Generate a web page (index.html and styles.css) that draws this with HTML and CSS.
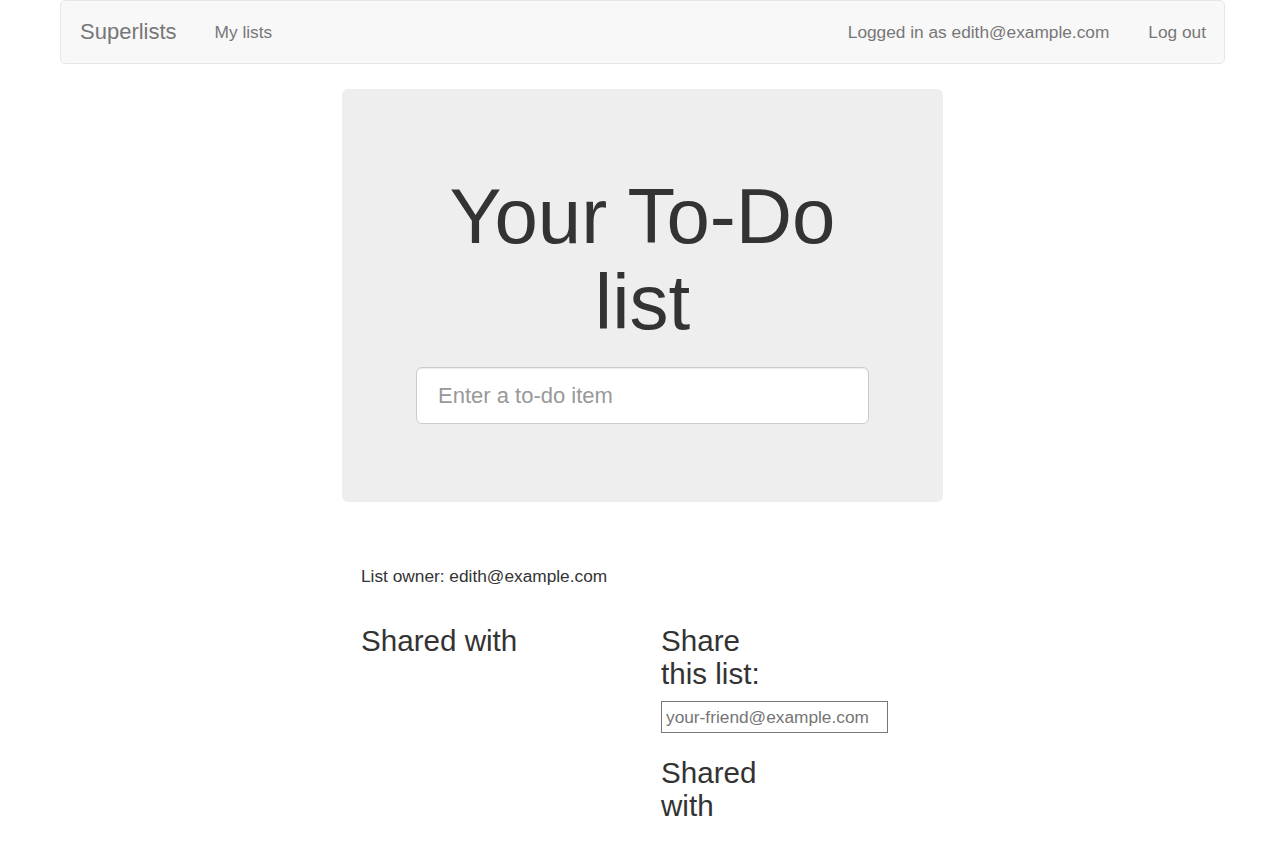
FILE: index.html
```html
<!DOCTYPE html>
<html lang="en">
<head>
<meta charset="utf-8">
<title>To-Do lists</title>
<link rel="stylesheet" href="styles.css">
</head>
<body>
  <nav class="navbar">
    <div class="nav-left">
      <a class="brand" href="#">Superlists</a>
      <a class="nav-link" href="#">My lists</a>
    </div>
    <div class="nav-right">
      <span class="nav-text">Logged in as edith@example.com</span>
      <a class="nav-link" href="#">Log out</a>
    </div>
  </nav>

  <div class="jumbotron">
    <h1 class="title">Your To-Do list</h1>
    <form class="item-form">
      <input class="item-input" type="text" placeholder="Enter a to-do item">
    </form>
  </div>

  <div class="content">
    <p class="owner">List owner: edith@example.com</p>
    <div class="columns">
      <div class="col-left">
        <h3 class="section-title">Shared with</h3>
      </div>
      <div class="col-right">
        <h3 class="section-title">Share this list:</h3>
        <form class="share-form">
          <input class="share-input" type="text" placeholder="your-friend@example.com">
        </form>
        <h3 class="section-title shared-title">Shared with</h3>
      </div>
    </div>
  </div>
</body>
</html>
```

FILE: styles.css
```css
* {
  box-sizing: border-box;
}

body {
  margin: 0;
  font-family: "Liberation Sans", Arial, sans-serif;
  font-size: 17.3px;
  color: #333;
  background: #fff;
}

a {
  text-decoration: none;
}

.navbar {
  width: 1165px;
  height: 64px;
  margin: 0 auto;
  background: #f8f8f8;
  border: 1px solid #e7e7e7;
  border-radius: 5px;
  display: flex;
  align-items: center;
  justify-content: space-between;
  padding: 0 18px 0 19px;
}

.nav-left,
.nav-right {
  display: flex;
  align-items: center;
}

.brand {
  font-size: 22px;
  color: #777;
  margin-right: 38px;
}

.nav-link,
.nav-text {
  font-size: 17.3px;
  color: #777;
}

.nav-text {
  margin-right: 39px;
}

.jumbotron {
  width: 601px;
  margin: 25px auto 0;
  background: #eee;
  border-radius: 6px;
  padding: 84px 0 78px;
  display: flex;
  flex-direction: column;
  align-items: center;
}

.title {
  margin: 0 0 22px;
  width: 440px;
  text-align: center;
  font-size: 78px;
  font-weight: normal;
  line-height: 86px;
  color: #333;
}

.item-form {
  margin: 0;
}

.item-input {
  display: block;
  width: 453px;
  height: 57px;
  padding: 0 21px;
  font-family: inherit;
  font-size: 22px;
  color: #555;
  background: #fff;
  border: 1px solid #ccc;
  border-radius: 6px;
  box-shadow: inset 0 1px 1px rgba(0, 0, 0, 0.075);
}

.item-input::placeholder {
  color: #999;
}

.content {
  width: 601px;
  margin: 62px auto 0;
  padding-left: 19px;
}

.owner {
  margin: 0;
  line-height: 24px;
}

.columns {
  display: flex;
  margin-top: 36px;
}

.col-left {
  width: 300px;
}

.col-right {
  width: 120px;
}

.section-title {
  margin: 0;
  font-size: 29.6px;
  font-weight: normal;
  line-height: 33px;
  color: #333;
}

.share-form {
  margin: 11px 0 0;
}

.share-input {
  display: block;
  width: 227px;
  height: 32px;
  padding: 0 4px;
  font-family: inherit;
  font-size: 17.3px;
  border: 1px solid #767676;
  border-radius: 0;
  background: #fff;
}

.share-input::placeholder {
  color: #757575;
}

.shared-title {
  margin-top: 23px;
}
```
